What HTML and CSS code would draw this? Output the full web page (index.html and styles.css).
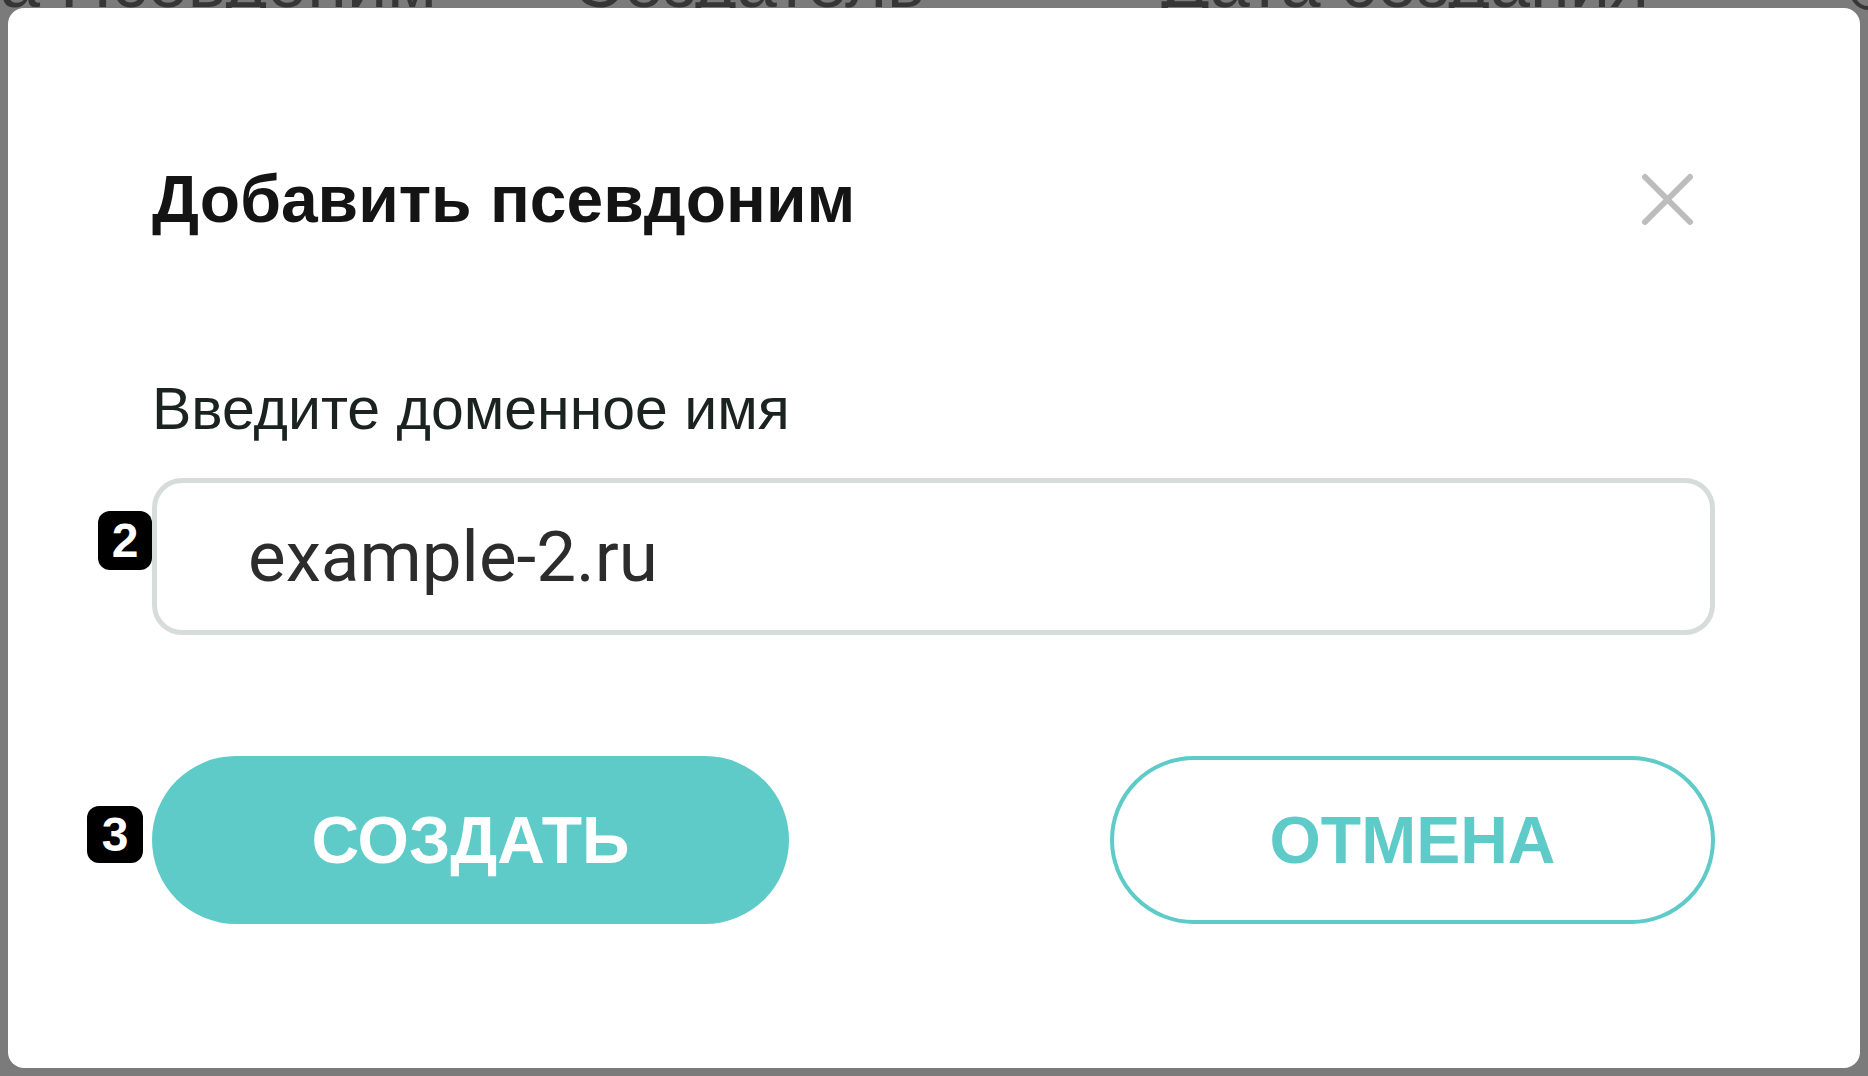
FILE: index.html
```html
<!DOCTYPE html>
<html lang="ru">
<head>
<meta charset="utf-8">
<title>Добавить псевдоним</title>
<link rel="stylesheet" href="styles.css">
</head>
<body>
<div class="page">
  <div class="table-head">
    <span class="th th-alias">а Псевдоним</span>
    <span class="th th-status">Создатель</span>
    <span class="th th-date">Дата создания</span>
    <span class="th-icon"></span>
  </div>
</div>
<div class="overlay">
  <div class="modal">
    <div class="modal-header">
      <h1 class="modal-title">Добавить псевдоним</h1>
      <button class="close-btn" aria-label="Закрыть">
        <svg width="53" height="53" viewBox="0 0 53 53"><path d="M4 4 L49 49 M49 4 L4 49" stroke="#bdbdbd" stroke-width="6" stroke-linecap="round"/></svg>
      </button>
    </div>
    <label class="field-label">Введите доменное имя</label>
    <div class="field">
      <span class="badge badge-2">2</span>
      <div class="input">example-2.ru</div>
    </div>
    <div class="actions">
      <div class="btn-wrap">
        <span class="badge badge-3">3</span>
        <button class="btn btn-primary">СОЗДАТЬ</button>
      </div>
      <button class="btn btn-outline">ОТМЕНА</button>
    </div>
  </div>
</div>
</body>
</html>
```
FILE: styles.css
```css
* { box-sizing: border-box; }
html, body { margin: 0; padding: 0; }
body {
  background: #7b7b7b;
  width: 1868px;
  height: 1076px;
  overflow: hidden;
  font-family: "Liberation Sans", Arial, sans-serif;
  position: relative;
}
.page { height: 100%; }
.table-head {
  display: flex;
  align-items: flex-end;
  height: 8px;
  overflow: visible;
  position: relative;
}
.th {
  font-size: 72px;
  line-height: 1;
  color: #363636;
  white-space: nowrap;
  transform: translateY(10px);
}
.th-alias { width: 572px; }
.th-status { width: 589px; }
.th-icon {
  position: absolute;
  right: -20px;
  top: -40px;
  width: 40px;
  height: 50px;
  border: 4px solid #363636;
  border-radius: 50%;
}
.overlay {
  position: absolute;
  inset: 8px;
}
.modal {
  background: #ffffff;
  border-radius: 16px;
  width: 100%;
  height: 100%;
  padding: 158px 145px 0 144px;
  display: flex;
  flex-direction: column;
}
.modal-header {
  display: flex;
  justify-content: space-between;
  align-items: center;
  height: 66px;
}
.modal-title {
  margin: 0;
  font-size: 66px;
  line-height: 1;
  font-weight: 700;
  color: #141414;
}
.close-btn {
  border: 0;
  background: none;
  padding: 0;
  width: 53px;
  height: 53px;
  margin-right: 21px;
  display: flex;
}
.field-label {
  margin-top: 148px;
  font-size: 59px;
  line-height: 1;
  color: #1a2320;
}
.field {
  position: relative;
  margin-top: 39px;
}
.input {
  height: 157px;
  border: 5px solid #d5dcd9;
  border-radius: 30px;
  padding-left: 91px;
  display: flex;
  align-items: center;
  font-family: Roboto, "Liberation Sans", sans-serif;
  font-size: 71px;
  color: #2c2c2c;
}
.badge {
  position: absolute;
  background: #000;
  color: #fff;
  font-weight: 700;
  font-family: "Liberation Sans", Arial, sans-serif;
  display: flex;
  align-items: center;
  justify-content: center;
  border-radius: 12px;
}
.badge-2 {
  left: -54px;
  top: 33px;
  width: 54px;
  height: 59px;
  font-size: 48px;
}
.badge-3 {
  left: -65px;
  top: 50px;
  width: 56px;
  height: 57px;
  font-size: 48px;
}
.actions {
  margin-top: 121px;
  display: flex;
  justify-content: space-between;
}
.btn-wrap { position: relative; }
.btn {
  height: 168px;
  border-radius: 84px;
  font-family: "Liberation Sans", Arial, sans-serif;
  font-weight: 700;
  font-size: 66px;
  letter-spacing: 0;
  cursor: pointer;
}
.btn-primary {
  width: 637px;
  background: #5ecbc9;
  border: 0;
  color: #fff;
}
.btn-outline {
  width: 605px;
  background: #fff;
  border: 4px solid #5ecbc9;
  color: #5ecbc9;
}
```
